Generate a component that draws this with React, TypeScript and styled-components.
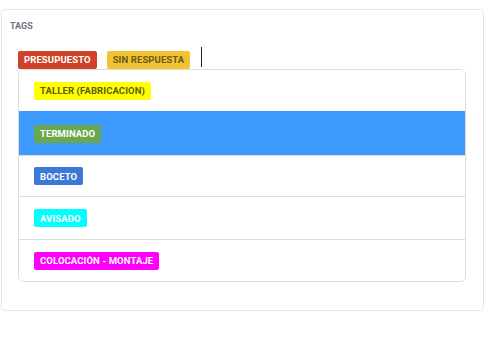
import React from "react";
import styled, { createGlobalStyle } from "styled-components";

const Global = createGlobalStyle`
  html, body { margin: 0; padding: 0; background: #ffffff; }
  body { font-family: Roboto, "Noto Sans", sans-serif; }
`;

const Page = styled.div`
  width: 489px;
  height: 345px;
  padding: 9px 0 0 1px;
  box-sizing: border-box;
`;

const Card = styled.div`
  width: 483px;
  height: 302px;
  box-sizing: border-box;
  border: 1px solid #e2e5e9;
  border-radius: 5px;
  padding: 10px 16px 0 8px;
  display: flex;
  flex-direction: column;
`;

const Label = styled.div`
  font-size: 9px;
  font-weight: 700;
  color: #6c7480;
  line-height: 10px;
  padding-top: 1px;
`;

const Field = styled.div`
  margin-top: 19px;
  padding-left: 8px;
  display: flex;
  flex-direction: column;
`;

const SelectedRow = styled.div`
  display: flex;
  align-items: center;
  gap: 10px;
  height: 19px;
`;

const Badge = styled.span<{ $bg: string; $fg: string }>`
  display: inline-flex;
  align-items: center;
  height: 18px;
  padding: 0 6px;
  border-radius: 2px;
  background: ${(p) => p.$bg};
  color: ${(p) => p.$fg};
  font-size: 9.5px;
  font-weight: 700;
  letter-spacing: 0.1px;
  white-space: nowrap;
  box-sizing: border-box;
`;

const Cursor = styled.span`
  width: 1px;
  height: 20px;
  background: #222;
  margin-left: 1px;
  align-self: flex-start;
  margin-top: -3px;
`;

const Menu = styled.div`
  width: 448px;
  border: 1px solid #dcdcdc;
  border-radius: 6px;
  overflow: hidden;
  box-sizing: border-box;
`;

const Option = styled.div<{ $active?: boolean; $h: number }>`
  height: ${(p) => p.$h}px;
  display: flex;
  align-items: center;
  padding-left: 15px;
  background: ${(p) => (p.$active ? "#3d9bff" : "#ffffff")};
  border-top: 1px solid ${(p) => (p.$active ? "#3d9bff" : "#dcdcdc")};
  box-sizing: border-box;
  &:first-child { border-top: none; }
`;

const options = [
  { label: "TALLER (FABRICACION)", bg: "#ffff00", fg: "#5f5c10", h: 41 },
  { label: "TERMINADO", bg: "#6aa84f", fg: "#ffffff", h: 44, active: true },
  { label: "BOCETO", bg: "#3c78d8", fg: "#ffffff", h: 41 },
  { label: "AVISADO", bg: "#00ffff", fg: "#ffffff", h: 43 },
  { label: "COLOCACIÓN - MONTAJE", bg: "#ff00ff", fg: "#ffffff", h: 42 },
];

export default function App() {
  return (
    <>
      <Global />
      <Page>
        <Card>
          <Label>TAGS</Label>
          <Field>
            <SelectedRow>
              <Badge $bg="#d0412a" $fg="#ffffff">PRESUPUESTO</Badge>
              <Badge $bg="#f1c232" $fg="#6b5a1a">SIN RESPUESTA</Badge>
              <Cursor />
            </SelectedRow>
            <Menu>
              {options.map((o) => (
                <Option key={o.label} $active={o.active} $h={o.h}>
                  <Badge $bg={o.bg} $fg={o.fg}>{o.label}</Badge>
                </Option>
              ))}
            </Menu>
          </Field>
        </Card>
      </Page>
    </>
  );
}
